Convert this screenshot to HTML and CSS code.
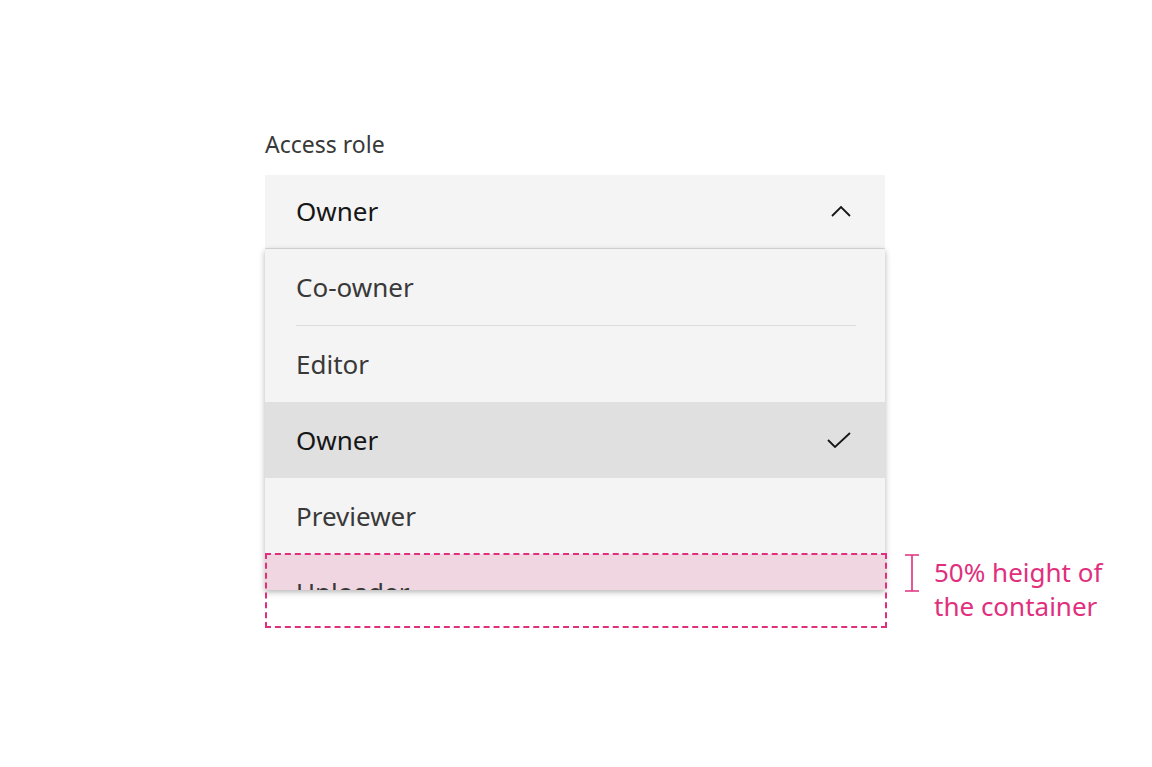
FILE: index.html
```html
<!DOCTYPE html>
<html lang="en">
<head>
    <meta charset="UTF-8">
    <title>Dropdown - menu height</title>
    <link rel="stylesheet" href="styles.css">
</head>
<body>

    <div class="page">
        <div class="label">Access role</div>

        <div class="field">
            <span>Owner</span>
            <svg class="chevron" width="20" height="12" viewBox="0 0 20 12">
                <polyline points="1,11 10,2 19,11" fill="none" stroke="#161616" stroke-width="1.8"/>
            </svg>
        </div>

        <div class="menu-wrap">
            <div class="menu">
                <div class="item">Co-owner</div>
                <div class="divider"></div>
                <div class="item">Editor</div>
                <div class="item selected">
                    <span>Owner</span>
                    <svg class="check" width="24" height="16" viewBox="0 0 24 16">
                        <polyline points="1,8 8,15 23,1" fill="none" stroke="#161616" stroke-width="1.8"/>
                    </svg>
                </div>
                <div class="item">Previewer</div>
                <div class="item half">Uploader</div>
            </div>

            <!-- annotation -->
            <div class="dash-box"></div>
            <svg class="ibeam" width="16" height="38" viewBox="0 0 16 38">
                <path d="M1 1H15M8 1V37M1 37H15" fill="none" stroke="#e0307d" stroke-width="1.6"/>
            </svg>
            <div class="note">50% height of<br>the container</div>
        </div>
    </div>

</body>
</html>
```

FILE: styles.css
```css
body {
    margin: 0;
    background: #ffffff;
    font-family: "Noto Sans", "Liberation Sans", sans-serif;
}

.page {
    padding: 129px 0 177px 265px;
}

.label {
    font-size: 23px;
    line-height: 30px;
    color: #393939;
    margin-bottom: 16px;
}

.field {
    width: 620px;
    height: 74px;
    box-sizing: border-box;
    background: #f4f4f4;
    border-bottom: 1px solid #dcdcdc;
    display: flex;
    align-items: center;
    justify-content: space-between;
    padding: 0 34px 2px 31px;
    font-size: 26px;
    color: #161616;
}

/* Menu */
.menu-wrap {
    position: relative;
    width: 620px;
}
.menu {
    height: 341px;
    overflow: hidden;
    background: #f4f4f4;
    box-shadow: 0 2px 6px rgba(0,0,0,0.3);
}
.item {
    height: 76px;
    display: flex;
    align-items: center;
    justify-content: space-between;
    padding: 0 34px 0 31px;
    box-sizing: border-box;
    font-size: 26px;
    color: #393939;
}
.item.selected {
    background: #e0e0e0;
    color: #161616;
}
.item.half {
    background: #efd6e1;
    align-items: flex-start;
    padding-top: 20px;
}
.divider {
    height: 1px;
    background: #dcdcdc;
    margin: 0 29px 0 31px;
}

.dash-box {
    position: absolute;
    left: 0;
    top: 304px;
    width: 622px;
    height: 75px;
    box-sizing: border-box;
    border: 2px dashed #e0307d;
}
.ibeam {
    position: absolute;
    left: 639px;
    top: 305px;
}
.note {
    position: absolute;
    left: 669px;
    top: 306px;
    font-size: 26px;
    line-height: 34px;
    color: #e0307d;
    white-space: nowrap;
}
```
